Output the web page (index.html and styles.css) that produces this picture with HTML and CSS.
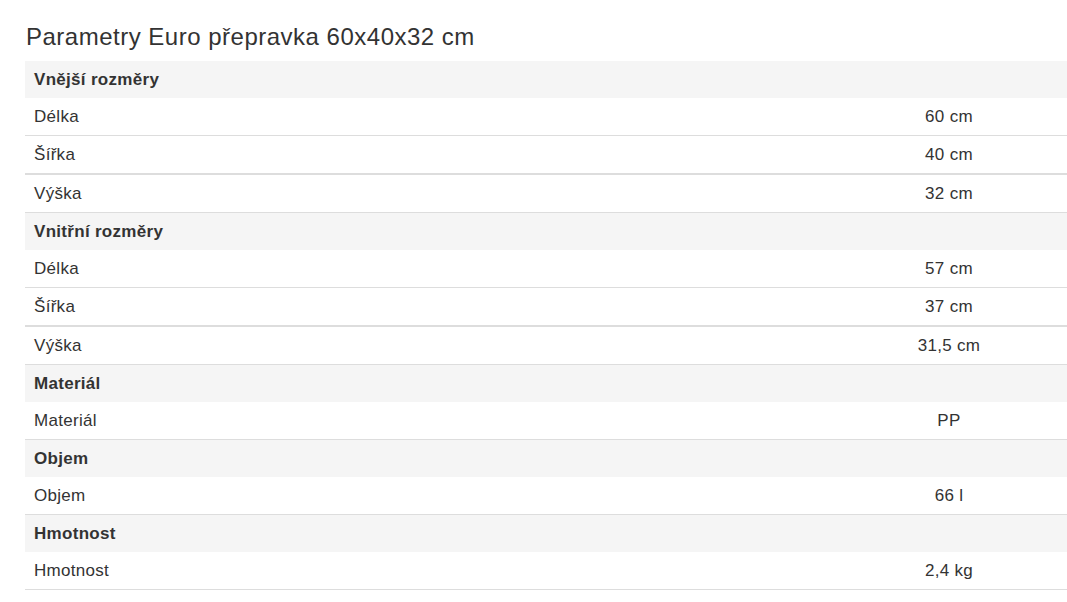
FILE: index.html
```html
<!DOCTYPE html>
<html lang="cs">
<head>
<meta charset="utf-8">
<title>Parametry Euro přepravka 60x40x32 cm</title>
<link rel="stylesheet" href="styles.css">
</head>
<body>
<div class="page">
  <h3 class="title">Parametry Euro přepravka 60x40x32 cm</h3>
  <table class="params">
    <tbody>
      <tr class="group"><th colspan="2">Vnější rozměry</th></tr>
      <tr><td class="name">Délka</td><td class="val">60 cm</td></tr>
      <tr class="thick"><td class="name">Šířka</td><td class="val">40 cm</td></tr>
      <tr><td class="name">Výška</td><td class="val">32 cm</td></tr>
      <tr class="group"><th colspan="2">Vnitřní rozměry</th></tr>
      <tr><td class="name">Délka</td><td class="val">57 cm</td></tr>
      <tr class="thick"><td class="name">Šířka</td><td class="val">37 cm</td></tr>
      <tr><td class="name">Výška</td><td class="val">31,5 cm</td></tr>
      <tr class="group"><th colspan="2">Materiál</th></tr>
      <tr><td class="name">Materiál</td><td class="val">PP</td></tr>
      <tr class="group"><th colspan="2">Objem</th></tr>
      <tr><td class="name">Objem</td><td class="val">66 l</td></tr>
      <tr class="group"><th colspan="2">Hmotnost</th></tr>
      <tr><td class="name">Hmotnost</td><td class="val">2,4 kg</td></tr>
    </tbody>
  </table>
</div>
</body>
</html>
```
FILE: styles.css
```css
html, body {
  margin: 0;
  padding: 0;
  background: #fff;
}
body {
  font-family: "Liberation Sans", Arial, sans-serif;
  color: #333;
  font-size: 17px;
}
.page {
  padding: 22px 0 0 25px;
}
.title {
  margin: 0 0 10px 1px;
  font-size: 24px;
  font-weight: 400;
  line-height: 29px;
  letter-spacing: 0.5px;
  color: #333;
}
.params {
  width: 100%;
  border-collapse: collapse;
  border-spacing: 0;
}
.params th,
.params td {
  padding: 8px 9px;
  line-height: 21px;
  height: 21px;
  text-align: left;
  vertical-align: middle;
  letter-spacing: 0.3px;
}
.params tr.group th {
  background: #f5f5f5;
  font-weight: 700;
  border: 0;
}
.params td {
  border-bottom: 1px solid #ddd;
}
.params tr.thick td {
  border-bottom: 2px solid #ddd;
}
.params td.val {
  width: 218px;
  text-align: center;
}
```
